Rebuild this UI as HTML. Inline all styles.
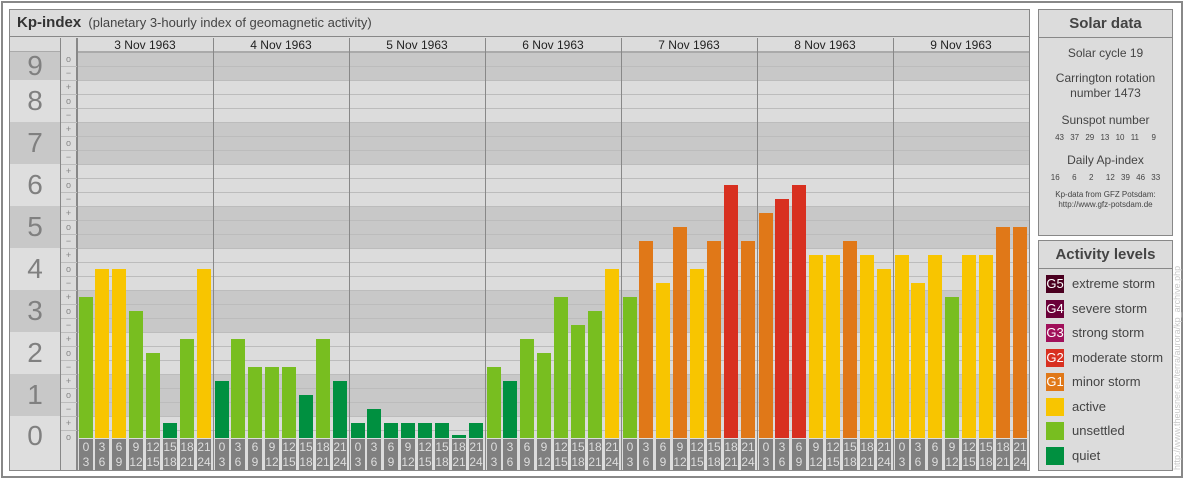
<!DOCTYPE html>
<html><head><meta charset="utf-8"><style>
*{margin:0;padding:0;box-sizing:border-box}
body{width:1184px;height:480px;background:#fff;position:relative;overflow:hidden;font-family:"Liberation Sans",sans-serif}
.a{position:absolute}
</style></head><body>
<div class="a" style="left:1px;top:1px;width:1182px;height:477px;border:2px solid #888;background:#fff"></div>
<div class="a" style="left:9px;top:9px;width:1021px;height:462px;border:1px solid #888;background:#dcdcdc"></div>
<div class="a" style="left:10px;top:10px;width:1019px;height:27px;border-bottom:1px solid #888;background:#dcdcdc;font-size:15px;line-height:26px;padding-left:7px;color:#333"><b>Kp-index</b><span style="font-size:13px;color:#444">&nbsp;&nbsp;(planetary 3-hourly index of geomagnetic activity)</span></div>
<div id="c"></div>
<div class="a" style="left:1038px;top:9px;width:135px;height:227px;border:1px solid #888;background:#dcdcdc;text-align:center;color:#444">
 <div style="height:28px;border-bottom:1px solid #888;font-size:15px;font-weight:bold;line-height:28px">Solar data</div>
 <div style="font-size:12px;margin-top:8px">Solar cycle 19</div>
 <div style="font-size:12px;margin-top:11px;line-height:15px">Carrington rotation<br>number 1473</div>
 <div style="font-size:12px;margin-top:12px">Sunspot number</div>
 <div style="font-size:8px;margin-top:6px;word-spacing:4px">43 37 29 13 10 11 &nbsp;9</div>
 <div style="font-size:12px;margin-top:11px">Daily Ap-index</div>
 <div style="font-size:8px;margin-top:6px;word-spacing:4px">16 &nbsp;6 &nbsp;2 &nbsp;12 39 46 33</div>
 <div style="font-size:8px;margin-top:8px;line-height:10px">Kp-data from GFZ Potsdam:<br>http://www.gfz-potsdam.de</div>
</div>
<div class="a" style="left:1038px;top:240px;width:135px;height:231px;border:1px solid #888;background:#dcdcdc;color:#444">
 <div style="height:28px;border-bottom:1px solid #888;font-size:15px;font-weight:bold;line-height:28px;text-align:center">Activity levels</div>
</div>
<div id="leg"></div>
<div class="a" style="left:1172px;top:470px;transform-origin:0 0;transform:rotate(-90deg);font-size:9px;color:#c8c8c8;white-space:nowrap;width:230px">http://www.theusner.eu/terra/aurora/kp_archive.php</div>
<script>
(function(){
var h='';
function A(s,t){h+='<div class="a" style="'+s+'">'+(t===undefined?'':t)+'</div>';}
var nums=['9','8','7','6','5','4','3','2','1','0'];
for(var i=0;i<10;i++){var ty=i==0?52:80+(i-1)*42, ht=i==0?28:(i==9?22:42);
 var dark=(i%2==0);
 A('left:10px;top:'+ty+'px;width:50px;height:'+(i==9?54:ht)+'px;background:'+(dark?'#c8c8c8':'#dedede')+';color:#808080;font-size:28px;text-align:center;line-height:'+(i==9?40:ht)+'px',nums[i]);
 A('left:77px;top:'+ty+'px;width:952px;height:'+ht+'px;background:'+(dark?'#c8c8c8':'#dcdcdc'));
}
A('left:10px;top:38px;width:1019px;height:14px;background:#dcdcdc;border-bottom:1px solid #aaa');
A('left:60px;top:38px;width:17px;height:432px;background:#dcdcdc;border-left:1px solid #888;border-right:1px solid #888');
for(var t=27;t>=0;t--){var y=437-14*t;var m=t%3;var s=m==0?'o':(m==1?'+':'−');
 A('left:61px;top:'+(y-7)+'px;width:15px;height:14px;font-size:9px;color:#888;text-align:center;line-height:14px',s);
 if(t>0) A('left:61px;top:'+(y+7)+'px;width:968px;height:1px;background:#bcbcbc');
}
A('left:77px;top:52px;width:952px;height:1px;background:#aaa');
var days=['3 Nov 1963','4 Nov 1963','5 Nov 1963','6 Nov 1963','7 Nov 1963','8 Nov 1963','9 Nov 1963'];
for(var d=0;d<7;d++){A('left:'+(77+136*d)+'px;top:38px;width:136px;height:14px;font-size:12px;color:#222;text-align:center;line-height:14px',days[d]);
 A('left:'+(77+136*d)+'px;top:38px;width:1px;height:432px;background:#888');}
var v=[10,12,12,9,6,1,7,12, 4,7,5,5,5,3,7,4, 1,2,1,1,1,1,0,1, 5,4,7,6,10,8,9,12, 10,14,11,15,12,14,18,14, 16,17,18,13,13,14,13,12, 13,11,13,10,13,13,15,15];
var lab=['0<br>3','3<br>6','6<br>9','9<br>12','12<br>15','15<br>18','18<br>21','21<br>24'];
for(var k=0;k<56;k++){var tv=v[k];var x=77+17*k+(k%8==0?2:1);var by=437-14*tv;var hh=438-by;if(tv==0){by=435;hh=3;}
 var c=tv<=4?'#009040':tv<=10?'#78be20':tv<=13?'#f8c500':tv<=16?'#e07818':'#d83020';
 A('left:'+x+'px;top:'+by+'px;width:14px;height:'+hh+'px;background:'+c);
 A('left:'+x+'px;top:439px;width:14px;height:31px;background:#808080;color:#ddd;font-size:12px;text-align:center;line-height:15px;padding-top:1px',lab[k%8]);
}
document.getElementById('c').outerHTML=h;
h='';
var L=[['#4a0020','G5','extreme storm'],['#6a0038','G4','severe storm'],['#a0105a','G3','strong storm'],['#d83020','G2','moderate storm'],['#e07818','G1','minor storm'],['#f8c500','','active'],['#78be20','','unsettled'],['#009040','','quiet']];
for(var i2=0;i2<8;i2++){var ly=Math.round(275+24.5*i2);
 A('left:1046px;top:'+ly+'px;width:18px;height:18px;background:'+L[i2][0]+';color:#fff;font-size:13px;line-height:18px;text-align:center',L[i2][1]);
 A('left:1072px;top:'+ly+'px;font-size:13px;line-height:18px;color:#444;white-space:nowrap',L[i2][2]);}
document.getElementById('leg').outerHTML=h;
})();
</script>
</body></html>
